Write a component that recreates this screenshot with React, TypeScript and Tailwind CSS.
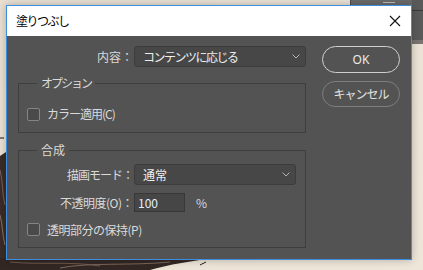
import React from "react";

function Chevron() {
  return (
    <svg width="8" height="5" viewBox="0 0 8 5" className="shrink-0">
      <path d="M0.5 0.5 L4 4 L7.5 0.5" fill="none" stroke="#b4b4b4" strokeWidth="1" />
    </svg>
  );
}

function Checkbox() {
  return <div className="w-[13px] h-[13px] shrink-0 rounded-[2px] border border-[#858585] bg-[#4a4a4a]" />;
}

function Background() {
  return (
    <svg className="absolute inset-0" width="423" height="270" viewBox="0 0 423 270">
      <defs>
        <linearGradient id="bg" x1="0" y1="0" x2="1" y2="1">
          <stop offset="0" stopColor="#e9e0d2" />
          <stop offset="1" stopColor="#efe6da" />
        </linearGradient>
      </defs>
      <rect width="423" height="270" fill="url(#bg)" />
      <rect x="350" y="0" width="73" height="11" fill="#6a6a6a" />
      <rect x="350" y="0" width="1" height="11" fill="#4a4a4a" />
      <rect x="383" y="2" width="12" height="1" fill="#bdbdbd" />
      <rect x="383" y="5" width="12" height="1" fill="#bdbdbd" />
      <rect x="383" y="8" width="12" height="1" fill="#bdbdbd" />
      <rect x="412" y="0" width="11" height="44" fill="#5a5a5a" />
      <rect x="412" y="10" width="11" height="1" fill="#3a3a3a" />
      <rect x="412" y="40" width="11" height="4" fill="#7a7470" />
      <path d="M0 156 L6 152 L6 270 L0 270 Z" fill="#3a2d28" />
      <path d="M0 258 L210 258 C190 262 170 264 150 270 L0 270 Z" fill="#332723" />
      <path d="M0 170 C3 180 2 195 5 205" stroke="#7a6358" strokeWidth="1" fill="none" />
      <path d="M0 215 C3 225 2 235 5 245" stroke="#8a7264" strokeWidth="1" fill="none" />
      <path d="M10 262 C40 265 70 261 100 266" stroke="#6d5a50" strokeWidth="1" fill="none" />
      <path d="M60 268 C90 262 130 266 170 262" stroke="#7d675b" strokeWidth="1" fill="none" />
      <path d="M200 265 L206 262" stroke="#222" strokeWidth="1" fill="none" />
      <path d="M0 138 L4 138" stroke="#111" strokeWidth="1" />
    </svg>
  );
}

export default function App() {
  const font = { fontFamily: '"Noto Sans CJK JP", "Noto Sans", sans-serif' };
  return (
    <div className="relative w-[423px] h-[270px] overflow-hidden" style={font}>
      <Background />
      <div className="relative pl-[6px] pt-[5px]">
        <div className="w-[406px] h-[255px] border border-[#3d8ee0] bg-[#535353] flex flex-col shadow-[0_0_8px_rgba(0,0,0,0.25)]">
          {/* title bar */}
          <div className="h-[30px] bg-white flex items-center justify-between pl-[9px] pr-[9px]">
            <span className="text-[12px] tracking-[-1.5px] text-black leading-none">塗りつぶし</span>
            <svg width="12" height="12" viewBox="0 0 12 12" className="mr-[1px]">
              <path d="M1 1 L11 11 M11 1 L1 11" stroke="#111" strokeWidth="1.1" />
            </svg>
          </div>
          {/* body */}
          <div className="flex-1 flex pl-[11px] pr-[11px] pt-[10px] text-[12px] text-[#dadada]">
            <div className="w-[288px] flex flex-col">
              <div className="flex items-center h-[21px]">
                <div className="w-[116px] text-right pr-[1px] leading-none">内容：</div>
                <div className="w-[172px] h-[21px] rounded-[3px] border border-[#3c3c3c] bg-[#474747] flex items-center justify-between pl-[8px] pr-[5px]">
                  <span className="text-[#eeeeee] tracking-[-1.5px] leading-none">コンテンツに応じる</span>
                  <Chevron />
                </div>
              </div>

              <div className="relative mt-[16px] h-[50px] border border-[#3e3e3e] flex items-center pl-[8px] pt-[12px]">
                <span className="absolute left-[18px] top-[-9px] px-[4px] bg-[#535353] leading-[16px] tracking-[-2px]">オプション</span>
                <Checkbox />
                <span className="ml-[7px] leading-none tracking-[-1px]">カラー適用(C)</span>
              </div>

              <div className="relative mt-[17px] h-[98px] border border-[#3e3e3e] flex flex-col pt-[13px]">
                <span className="absolute left-[18px] top-[-9px] px-[4px] bg-[#535353] leading-[16px]">合成</span>
                <div className="flex items-center h-[21px]">
                  <div className="w-[115px] text-right pr-[1px] leading-none tracking-[-1px]">描画モード：</div>
                  <div className="w-[162px] h-[21px] rounded-[3px] border border-[#3c3c3c] bg-[#474747] flex items-center justify-between pl-[8px] pr-[5px]">
                    <span className="text-[#eeeeee] leading-none">通常</span>
                    <Chevron />
                  </div>
                </div>
                <div className="flex items-center h-[19px] mt-[8px]">
                  <div className="w-[115px] text-right pr-[1px] leading-none tracking-[-0.5px]">不透明度(O)：</div>
                  <div className="w-[51px] h-[19px] border border-[#383838] bg-[#464646] flex items-center pl-[3px]">
                    <span className="text-[#e6eefa] leading-none">100</span>
                  </div>
                  <span className="ml-[11px] leading-none text-[#cfd8e6]">%</span>
                </div>
                <div className="flex items-center pl-[8px] mt-[11px]">
                  <Checkbox />
                  <span className="ml-[7px] leading-none tracking-[-0.5px]">透明部分の保持(P)</span>
                </div>
              </div>
            </div>

            <div className="ml-[16px] w-[78px] flex flex-col gap-[8px]">
              <div className="h-[27px] rounded-full border border-[#cfcfcf] flex items-center justify-center text-[#ececec] text-[12px] leading-none" style={{ fontFamily: '"Noto Sans", sans-serif' }}>
                OK
              </div>
              <div className="h-[26px] rounded-full border border-[#7e7e7e] flex items-center justify-center text-[#e2e2e2] text-[12px] leading-none tracking-[-1px]">
                キャンセル
              </div>
            </div>
          </div>
        </div>
      </div>
    </div>
  );
}
